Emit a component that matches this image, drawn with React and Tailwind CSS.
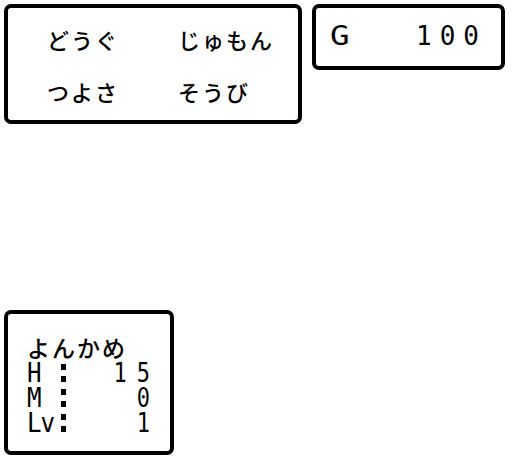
import React from 'react';

const jp = { fontFamily: '"Noto Sans CJK JP", "DejaVu Sans", sans-serif' };

// Window frame used by every panel
const Frame = ({ className = '', children }) => (
  <div className={`border-4 border-black rounded-[7px] bg-white ${className}`}>{children}</div>
);

const Colon = () => (
  <div className="flex flex-col justify-center gap-[6px] w-[6px]">
    <div className="w-[5px] h-[6px] bg-black" />
    <div className="w-[5px] h-[6px] bg-black" />
  </div>
);

const StatRow = ({ label, value }) => (
  <div className="flex items-center h-[25px] overflow-visible">
    <span className="block w-[34px] h-[25px] text-[22px] leading-[25px] tracking-[-1px] font-['DejaVu_Sans_Mono',monospace] scale-y-[1.2] scale-x-[1.1] origin-left">
      {label}
    </span>
    <Colon />
    <span className="block flex-1 h-[25px] text-right text-[22px] leading-[25px] tracking-[10px] -mr-[10px] font-['DejaVu_Sans_Mono',monospace] scale-y-[1.2]">
      {value}
    </span>
  </div>
);

const App = () => {
  const commands = ['どうぐ', 'じゅもん', 'つよさ', 'そうび'];

  return (
    <div className="w-[512px] h-[460px] bg-white text-black pt-[4px] pl-[4px]">
      <div className="flex items-start gap-[10px]">
        {/* Command menu */}
        <Frame className="w-[298px] h-[120px]">
          <div className="grid grid-cols-[131px_1fr] gap-y-[26px] pl-[39px] pt-[18px]" style={jp}>
            {commands.map((c) => (
              <span key={c} className="text-[22px] leading-[26px] tracking-[2px] font-medium">
                {c}
              </span>
            ))}
          </div>
        </Frame>

        {/* Gold */}
        <Frame className="w-[193px] h-[66px]">
          <div className="flex justify-between items-center pl-[14px] pr-[14px] pt-[15px] text-[26px] leading-[26px] font-['DejaVu_Sans_Mono',monospace]">
            <span className="scale-x-125 origin-left">G</span>
            <span className="tracking-[8px]">100</span>
          </div>
        </Frame>
      </div>

      {/* Party status */}
      <Frame className="mt-[186px] w-[170px] h-[145px]">
        <div className="pl-[19px] pr-[20px] pt-[21px]">
          <div className="text-[23px] leading-[25px] tracking-[2px] font-medium" style={jp}>
            よんかめ
          </div>
          <StatRow label="H" value="15" />
          <StatRow label="M" value="0" />
          <StatRow label="Lv" value="1" />
        </div>
      </Frame>
    </div>
  );
};

export default App;
